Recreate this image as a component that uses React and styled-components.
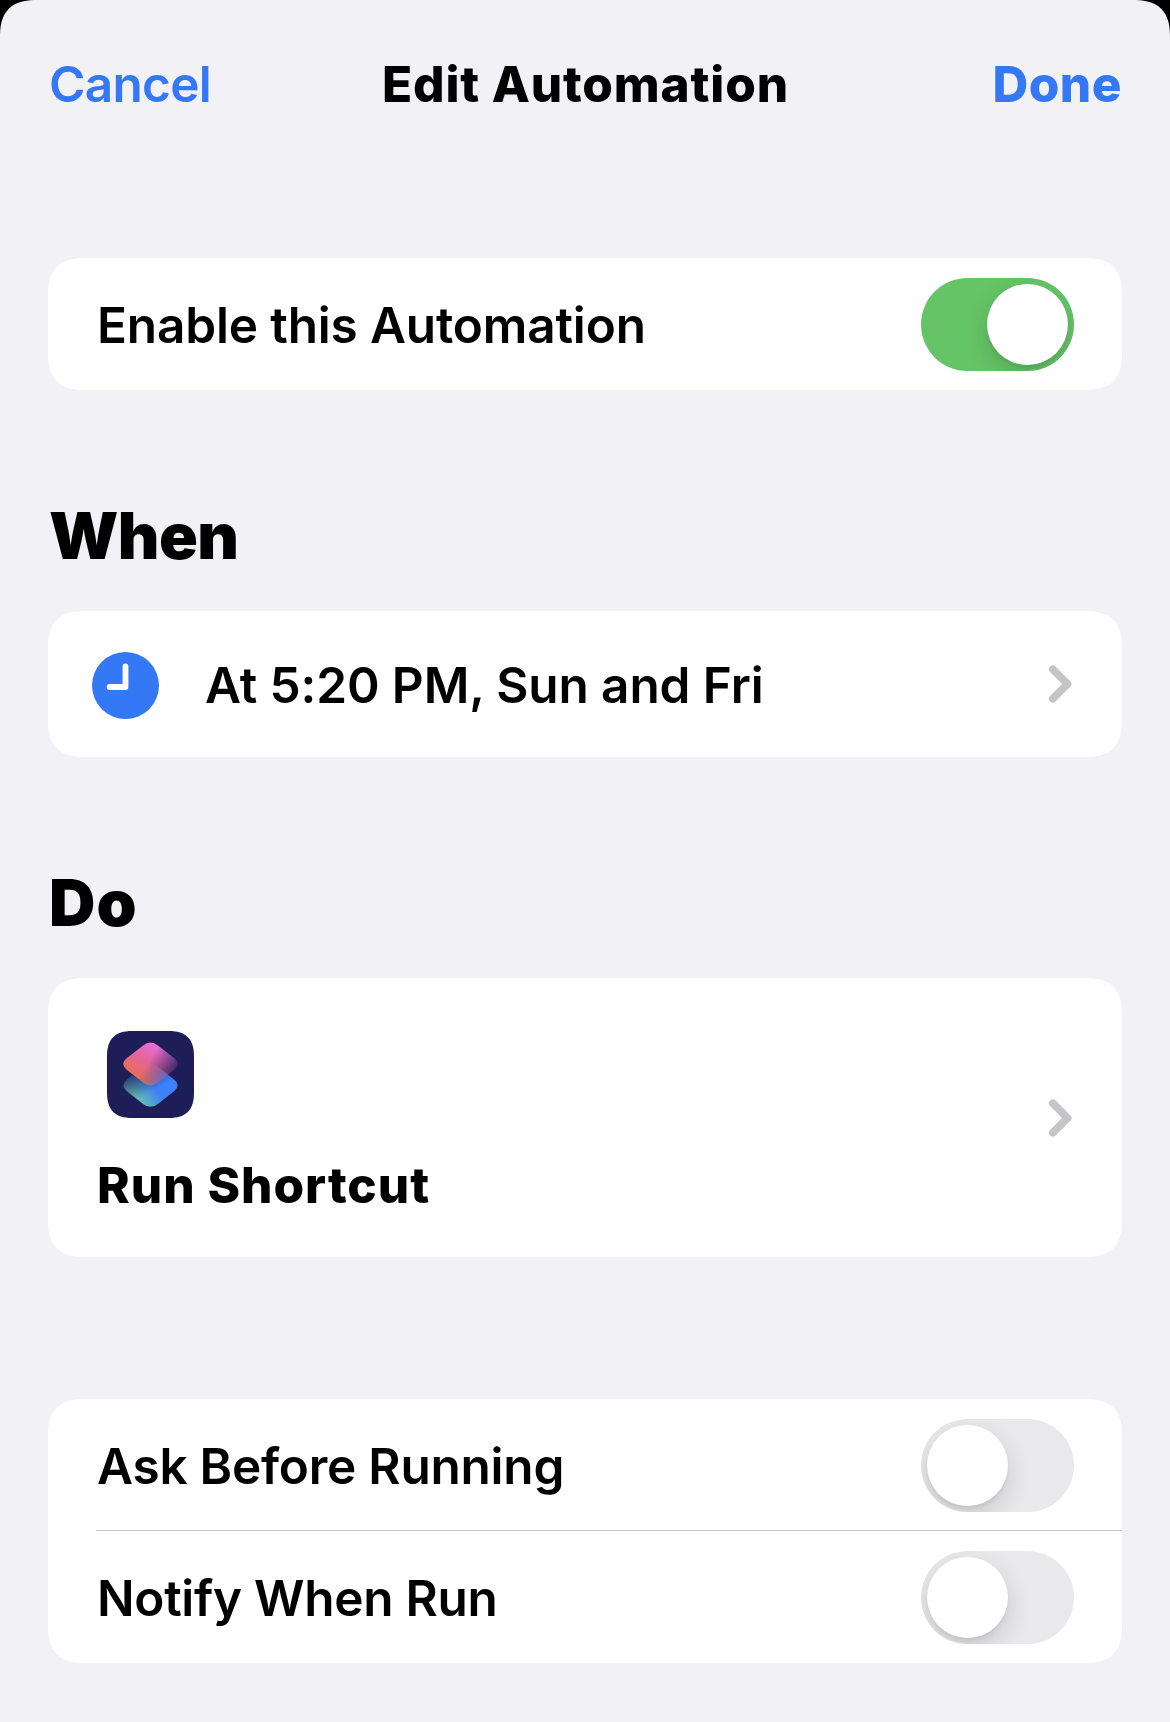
import React, { useState } from "react";
import styled, { createGlobalStyle, css } from "styled-components";

const GlobalStyle = createGlobalStyle`
  *, *::before, *::after { box-sizing: border-box; }
  body {
    margin: 0;
    background: #000;
    font-family: Inter, "Liberation Sans", sans-serif;
    color: #000;
    -webkit-font-smoothing: antialiased;
  }
  button { font: inherit; border: 0; padding: 0; background: none; }
`;

const smoothCorner = css`
  border-radius: ${(p) => (p.$topOnly ? "30px 30px 0 0" : "30px")};
  @supports (corner-shape: superellipse(1.4)) {
    border-radius: ${(p) => (p.$topOnly ? "38px 38px 0 0" : "38px")};
    corner-shape: superellipse(1.4);
  }
`;

const Sheet = styled.main`
  ${smoothCorner}
  display: flex;
  flex-direction: column;
  width: 1170px;
  height: 1722px;
  padding: 0 48px;
  background: #f2f1f6;
`;

const NavBar = styled.header`
  display: grid;
  grid-template-columns: 1fr auto 1fr;
  align-items: center;
  height: 168px;
  margin-bottom: 90px;
  line-height: 60px;
`;

const NavButton = styled.button`
  justify-self: ${(p) => (p.$primary ? "end" : "start")};
  && {
    padding-left: 1px;
    font-size: 49.5px;
    font-weight: ${(p) => (p.$primary ? 800 : 600)};
  }
  letter-spacing: ${(p) => p.$tracking};
  color: #3478f6;
`;

const Title = styled.h1`
  margin: 0;
  padding-left: 1px;
  font-size: 49.5px;
  font-weight: 800;
  letter-spacing: ${(p) => p.$tracking};
`;

const Heading = styled.h2`
  margin: 107px 0 36px 1px;
  font-size: 64.2px;
  line-height: 78px;
  font-weight: 900;
  letter-spacing: ${(p) => p.$tracking};
`;

const Card = styled.section`
  ${smoothCorner}
  flex: none;
  margin-top: ${(p) => p.$gap || 0}px;
  background: #fff;
`;

const Row = styled.div`
  display: flex;
  align-items: center;
  height: ${(p) => p.$height || 132}px;
  margin-left: 48px;
  padding-top: ${(p) => (p.$divided ? 2 : 1)}px;
  padding-right: 48px;
  border-bottom: ${(p) => (p.$divided ? "1px solid #c5c5c7" : "0")};
`;

const Label = styled.span`
  flex: 1;
  padding-top: 1px;
  padding-left: 1px;
  font-size: 49.5px;
  line-height: 60px;
  font-weight: ${(p) => (p.$bold ? 800 : 600)};
  letter-spacing: ${(p) => p.$tracking};
  white-space: nowrap;
`;

const Track = styled.button`
  display: flex;
  justify-content: ${(p) => (p.$on ? "flex-end" : "flex-start")};
  width: 153px;
  height: 93px;
  overflow: hidden;
  && { padding: 6px; }
  border-radius: 47px;
  && { background: ${(p) => (p.$on ? "#65c466" : "#e9e9eb")}; }
`;

const Knob = styled.span`
  width: 81px;
  height: 81px;
  border-radius: 50%;
  background: #fff;
  box-shadow: 0 9px 24px rgba(0, 0, 0, 0.15), 0 3px 3px rgba(0, 0, 0, 0.05);
`;

const ClockIcon = styled.svg`
  width: 67px;
  height: 67px;
  margin: 2px 45px 0 -4px;
`;

const ChevronIcon = styled.svg`
  width: 26px;
  height: 40px;
  margin: 0 2px 1px 0;
`;

const ActionRow = styled(Row)`
  height: 279px;
`;

const ActionBody = styled.div`
  display: flex;
  flex: 1;
  flex-direction: column;
  gap: 36px;
  padding: 10px 0 0;
`;

const AppIcon = styled.svg`
  width: 87px;
  height: 87px;
  margin-left: 11px;
`;

function Switch({ initial, label }) {
  const [on, setOn] = useState(initial);
  return (
    <Track $on={on} role="switch" aria-checked={on} aria-label={label} onClick={() => setOn(!on)}>
      <Knob />
    </Track>
  );
}

function Chevron() {
  return (
    <ChevronIcon viewBox="0 0 26 40" fill="none" stroke="#c5c5c7" strokeWidth="7.8" strokeLinecap="round" strokeLinejoin="round">
      <path d="M6.8 5.3 L21.6 20 L6.8 34.7" />
    </ChevronIcon>
  );
}

function Clock() {
  return (
    <ClockIcon viewBox="0 0 67 67">
      <circle cx="33.5" cy="33.5" r="33.5" fill="#3478f6" />
      <path d="M33.5 14.4 V35 H17.6" fill="none" stroke="#fff" strokeWidth="5.8" strokeLinecap="round" strokeLinejoin="round" />
    </ClockIcon>
  );
}

function ShortcutsIcon() {
  const tile =
    "M36.1 14.4 Q43.5 8.5 50.9 14.4 L67.1 27.1 Q74.5 33 67.1 38.9 L50.9 51.6 Q43.5 57.5 36.1 51.6 L19.9 38.9 Q12.5 33 19.9 27.1 Z";
  return (
    <AppIcon viewBox="0 0 87 87">
      <defs>
        <linearGradient id="warm" gradientUnits="userSpaceOnUse" x1="46" y1="11" x2="27" y2="43">
          <stop offset="0" stopColor="#e66fdc" />
          <stop offset="0.5" stopColor="#e5659c" />
          <stop offset="1" stopColor="#e66d5a" />
        </linearGradient>
        <linearGradient id="warmFade" gradientUnits="userSpaceOnUse" x1="42" y1="30" x2="68" y2="46">
          <stop offset="0" stopColor="#fff" />
          <stop offset="1" stopColor="#fff" stopOpacity="0.08" />
        </linearGradient>
        <linearGradient id="cool" gradientUnits="userSpaceOnUse" x1="42" y1="73" x2="64" y2="55">
          <stop offset="0" stopColor="#72d695" />
          <stop offset="1" stopColor="#3d80f7" />
        </linearGradient>
        <linearGradient id="coolFade" gradientUnits="userSpaceOnUse" x1="23" y1="41" x2="36" y2="65">
          <stop offset="0" stopColor="#fff" stopOpacity="0.12" />
          <stop offset="1" stopColor="#fff" />
        </linearGradient>
        <mask id="warmMask" maskUnits="userSpaceOnUse" x="0" y="0" width="87" height="87">
          <rect width="87" height="87" fill="url(#warmFade)" />
        </mask>
        <mask id="coolMask" maskUnits="userSpaceOnUse" x="0" y="0" width="87" height="87">
          <rect width="87" height="87" fill="url(#coolFade)" />
        </mask>
      </defs>
      <path d="M25 0 H62 C79 0 87 8 87 25 V62 C87 79 79 87 62 87 H25 C8 87 0 79 0 62 V25 C0 8 8 0 25 0 Z" fill="#1d1d57" />
      <g mask="url(#coolMask)">
        <path d={tile} transform="translate(0 21.3)" fill="url(#cool)" />
      </g>
      <g mask="url(#warmMask)">
        <path d={tile} fill="url(#warm)" />
      </g>
    </AppIcon>
  );
}

export default function App() {
  return (
    <>
      <GlobalStyle />
      <Sheet $topOnly>
        <NavBar>
          <NavButton $tracking="-0.7px">Cancel</NavButton>
          <Title $tracking="0.85px">Edit Automation</Title>
          <NavButton $primary $tracking="0.5px">Done</NavButton>
        </NavBar>

        <Card>
          <Row>
            <Label $tracking="-0.15px">Enable this Automation</Label>
            <Switch initial={true} label="Enable this Automation" />
          </Row>
        </Card>

        <Heading $tracking="-0.6px">When</Heading>
        <Card>
          <Row $height={146}>
            <Clock />
            <Label $tracking="-0.1px">At 5:20 PM, Sun and Fri</Label>
            <Chevron />
          </Row>
        </Card>

        <Heading $tracking="1.2px">Do</Heading>
        <Card>
          <ActionRow>
            <ActionBody>
              <ShortcutsIcon />
              <Label $bold $tracking="0.98px">Run Shortcut</Label>
            </ActionBody>
            <Chevron />
          </ActionRow>
        </Card>

        <Card $gap={142}>
          <Row $divided>
            <Label $tracking="-0.23px">Ask Before Running</Label>
            <Switch initial={false} label="Ask Before Running" />
          </Row>
          <Row>
            <Label $tracking="-0.28px">Notify When Run</Label>
            <Switch initial={false} label="Notify When Run" />
          </Row>
        </Card>
      </Sheet>
    </>
  );
}
